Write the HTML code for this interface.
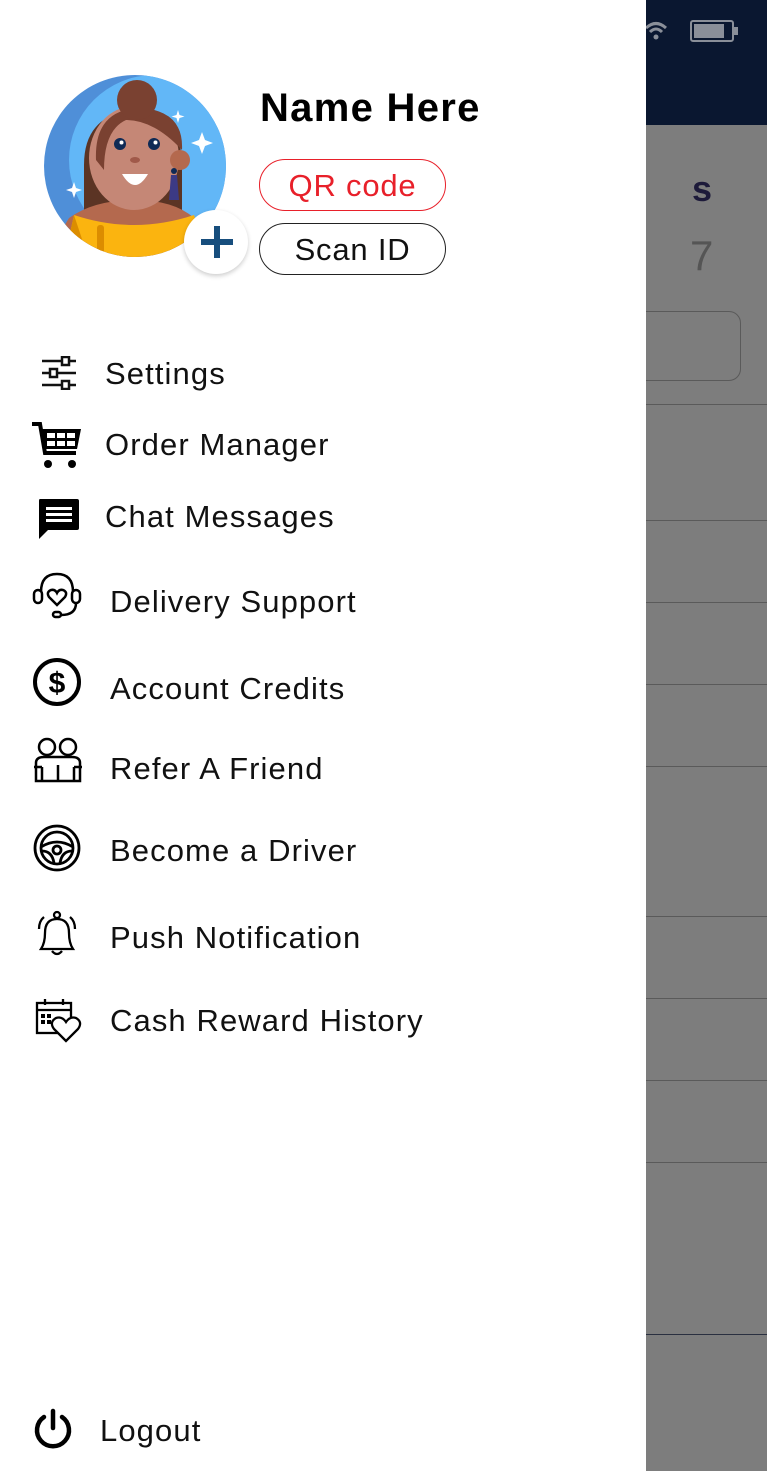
<!DOCTYPE html>
<html><head><meta charset="utf-8"><style>
*{margin:0;padding:0;box-sizing:border-box}
body{width:767px;height:1471px;position:relative;overflow:hidden;background:#fff;font-family:"Liberation Sans",sans-serif;color:#111}
.t{position:absolute;font-size:31px;line-height:36px;white-space:nowrap;letter-spacing:1.1px}
.ic{position:absolute}
.ov{position:absolute;left:646px;top:0;width:121px;height:1471px;background:#7d7d7d}
.ln{position:absolute;left:646px;width:121px;height:1px;background:#5a5a5a}
</style></head><body>
<div class="ov"></div>
<div style="position:absolute;left:646px;top:0;width:121px;height:125px;background:#0a1730"></div>
<svg class="ic" style="left:644px;top:18px" width="100" height="26" viewBox="0 0 100 26">
<path d="M2 10 Q12 1 22 10" stroke="#8a8f99" stroke-width="3" fill="none"/>
<path d="M6 14 Q12 8 18 14" stroke="#8a8f99" stroke-width="3" fill="none"/>
<circle cx="12" cy="19" r="2.5" fill="#8a8f99"/>
<rect x="47" y="3" width="42" height="20" rx="2" stroke="#8a8f99" stroke-width="2" fill="none"/>
<rect x="50" y="6" width="30" height="14" fill="#8a8f99"/>
<rect x="90" y="9" width="4" height="8" fill="#8a8f99"/>
</svg>
<div style="position:absolute;left:692px;top:168px;font-size:36px;font-weight:bold;color:#1d1a3a">s</div>
<div style="position:absolute;left:690px;top:232px;font-size:42px;color:#555">7</div>
<div style="position:absolute;left:600px;top:311px;width:141px;height:70px;border:1px solid #5a5a5a;border-radius:12px"></div>
<div class="ln" style="top:404px"></div><div class="ln" style="top:520px"></div><div class="ln" style="top:602px"></div><div class="ln" style="top:684px"></div><div class="ln" style="top:766px"></div><div class="ln" style="top:916px"></div><div class="ln" style="top:998px"></div><div class="ln" style="top:1080px"></div><div class="ln" style="top:1162px"></div><div class="ln" style="top:1334px;background:#2a3040"></div>
<div style="position:absolute;left:0;top:0;width:646px;height:1471px;background:#fff"></div>

<svg class="ic" style="left:44px;top:70px" width="185" height="190" viewBox="0 0 185 190">
<defs><clipPath id="c"><circle cx="91" cy="96" r="91"/></clipPath></defs>
<circle cx="91" cy="96" r="91" fill="#4f8fd8"/>
<g clip-path="url(#c)">
<circle cx="110" cy="90" r="85" fill="#62b7f7"/>
<path d="M40 95 Q40 45 90 40 Q140 45 138 100 L138 140 L40 140Z" fill="#5b3424"/>
<rect x="75" y="120" width="30" height="40" fill="#b4694e"/>
<path d="M0 190 L25 148 Q50 130 90 130 Q130 130 150 148 L180 190Z" fill="#b4694e"/>
<path d="M20 190 L30 145 Q90 165 150 145 L165 190Z" fill="#fbb40f"/>
<path d="M30 145 L45 190 L20 190Z" fill="#dc8d00"/>
<rect x="53" y="155" width="7" height="35" rx="3" fill="#dc8d00"/>
<ellipse cx="90" cy="88" rx="45" ry="52" fill="#c58776"/>
<circle cx="136" cy="90" r="10" fill="#b4694e"/>
<path d="M52 90 Q50 40 95 38 Q140 40 138 80 Q110 50 82 50 Q60 60 60 100Z" fill="#7a4131"/>
<circle cx="93" cy="30" r="20" fill="#7a4131"/>
<circle cx="76" cy="74" r="6" fill="#0f2a55"/><circle cx="110" cy="74" r="6" fill="#0f2a55"/>
<circle cx="77.5" cy="72.5" r="2" fill="#fff"/><circle cx="111.5" cy="72.5" r="2" fill="#fff"/>
<ellipse cx="91" cy="90" rx="5" ry="3" fill="#a0594a"/>
<path d="M78 104 Q91 126 104 104Z" fill="#fff"/>
<circle cx="130" cy="101" r="3" fill="#0f2a55"/>
<path d="M127 105 L133 105 L135 130 L125 130Z" fill="#3c3a85"/>
</g>
<path d="M158 62 l3 8 8 3 -8 3 -3 8 -3 -8 -8 -3 8 -3z" fill="#fff"/>
<path d="M30 112 l2 6 6 2 -6 2 -2 6 -2 -6 -6 -2 6 -2z" fill="#fff"/>
<path d="M134 40 l1.5 5 5 1.5 -5 1.5 -1.5 5 -1.5 -5 -5 -1.5 5 -1.5z" fill="#fff"/>
</svg>
<div style="position:absolute;left:184px;top:210px;width:64px;height:64px;border-radius:50%;background:#fff;box-shadow:0 2px 5px rgba(0,0,0,.2)"></div>
<div style="position:absolute;left:201px;top:239px;width:32px;height:6px;background:#174e7d"></div>
<div style="position:absolute;left:214px;top:226px;width:6px;height:32px;background:#174e7d"></div>

<div style="position:absolute;left:260px;top:86px;font-size:40px;font-weight:bold;color:#000;letter-spacing:1.3px">Name Here</div>
<div style="position:absolute;left:259px;top:159px;width:187px;height:52px;border:1px solid #e8202a;border-radius:26px;color:#e8202a;font-size:31px;line-height:52px;text-align:center;letter-spacing:0.8px">QR code</div>
<div style="position:absolute;left:259px;top:223px;width:187px;height:52px;border:1px solid #222;border-radius:26px;color:#111;font-size:31px;line-height:52px;text-align:center;letter-spacing:0.8px">Scan ID</div>

<svg class="ic" style="left:40px;top:356px" width="38" height="34" viewBox="0 0 38 34" stroke="#111" stroke-width="2.5" fill="#fff">
<line x1="2" y1="5" x2="36" y2="5"/><line x1="2" y1="17" x2="36" y2="17"/><line x1="2" y1="29" x2="36" y2="29"/>
<rect x="22" y="1" width="7" height="8"/><rect x="10" y="13" width="7" height="8"/><rect x="22" y="25" width="7" height="8"/>
</svg>
<div class="t" style="left:105px;top:356px">Settings</div>

<svg class="ic" style="left:31px;top:421px" width="52" height="50" viewBox="0 0 52 50">
<path d="M1 3 L9 3 L14 32 L45 32" stroke="#000" stroke-width="4" fill="none"/>
<path d="M10 8 L50 8 L46 28 L14 28Z" fill="#000"/>
<g fill="#fff"><rect x="16" y="12" width="8" height="5"/><rect x="26" y="12" width="8" height="5"/><rect x="36" y="12" width="8" height="5"/><rect x="16" y="20" width="8" height="5"/><rect x="26" y="20" width="8" height="5"/><rect x="36" y="20" width="8" height="5"/></g>
<circle cx="17" cy="43" r="4" fill="#000"/><circle cx="41" cy="43" r="4" fill="#000"/>
</svg>
<div class="t" style="left:105px;top:427px">Order Manager</div>

<svg class="ic" style="left:37px;top:498px" width="43" height="42" viewBox="0 0 43 42">
<path d="M3 1 H40 Q42 1 42 3 V30 Q42 32 40 32 H11 L2 41 V3 Q2 1 3 1Z" fill="#000"/>
<g fill="#fff"><rect x="9" y="9" width="26" height="3"/><rect x="9" y="15" width="26" height="3"/><rect x="9" y="21" width="26" height="3"/></g>
</svg>
<div class="t" style="left:105px;top:499px">Chat Messages</div>

<svg class="ic" style="left:31px;top:570px" width="52" height="50" viewBox="0 0 52 50" stroke="#000" stroke-width="2.5" fill="none">
<path d="M10 22 Q10 4 26 4 Q42 4 42 22"/>
<rect x="3" y="20" width="8" height="13" rx="4"/><rect x="41" y="20" width="8" height="13" rx="4"/>
<path d="M26 35 L18 27 Q15 22 20 20 Q24 19 26 23 Q28 19 32 20 Q37 22 34 27Z"/>
<path d="M45 33 Q45 45 30 45"/><rect x="22" y="42" width="8" height="5" rx="2.5"/>
</svg>
<div class="t" style="left:110px;top:584px">Delivery Support</div>

<svg class="ic" style="left:32px;top:657px" width="50" height="50" viewBox="0 0 50 50">
<circle cx="25" cy="25" r="22" stroke="#000" stroke-width="4" fill="none"/>
<text x="25" y="36" text-anchor="middle" font-family="Liberation Sans" font-weight="bold" font-size="30">$</text>
</svg>
<div class="t" style="left:110px;top:671px">Account Credits</div>

<svg class="ic" style="left:32px;top:737px" width="52" height="46" viewBox="0 0 52 46" stroke="#000" stroke-width="2.5" fill="none">
<circle cx="15" cy="10" r="8"/><circle cx="36" cy="10" r="8"/>
<path d="M4 44 V26 Q4 20 12 20 H40 Q48 20 48 26 V44 Z"/>
<path d="M10 44 V30 M42 44 V30 M26 44 V28"/>
<path d="M2 30 H10 M42 30 H50"/>
</svg>
<div class="t" style="left:110px;top:751px">Refer A Friend</div>

<svg class="ic" style="left:32px;top:823px" width="50" height="50" viewBox="0 0 50 50" stroke="#000" stroke-width="2.8" fill="none">
<circle cx="25" cy="25" r="22"/><circle cx="25" cy="25" r="16"/>
<path d="M9 24 Q25 14 41 24"/><circle cx="25" cy="27" r="4"/>
<path d="M10 28 Q20 28 22 40 M40 28 Q30 28 28 40"/>
</svg>
<div class="t" style="left:110px;top:833px">Become a Driver</div>

<svg class="ic" style="left:33px;top:909px" width="48" height="50" viewBox="0 0 48 50" stroke="#000" stroke-width="2.3" fill="none">
<circle cx="24" cy="6" r="3"/>
<path d="M8 40 Q12 34 12 24 Q12 10 24 10 Q36 10 36 24 Q36 34 40 40 Z"/>
<path d="M19 42 Q24 48 29 42"/>
<path d="M6 20 Q6 12 11 8 M42 20 Q42 12 37 8"/>
</svg>
<div class="t" style="left:110px;top:920px">Push Notification</div>

<svg class="ic" style="left:34px;top:997px" width="52" height="46" viewBox="0 0 52 46" stroke="#000" stroke-width="2.3" fill="none">
<rect x="3" y="6" width="34" height="30"/><line x1="3" y1="13" x2="37" y2="13"/>
<path d="M11 2 V8 M29 2 V8"/>
<g fill="#000" stroke="none"><rect x="7" y="17" width="4" height="4"/><rect x="13" y="17" width="4" height="4"/><rect x="7" y="23" width="4" height="4"/><rect x="13" y="23" width="4" height="4"/></g>
<path d="M32 44 L20 32 Q15 25 22 21 Q28 19 32 25 Q36 19 42 21 Q49 25 44 32 Z" fill="#fff"/>
</svg>
<div class="t" style="left:110px;top:1003px">Cash Reward History</div>

<svg class="ic" style="left:32px;top:1408px" width="42" height="42" viewBox="0 0 42 42" stroke="#000" stroke-width="4.5" fill="none" stroke-linecap="round">
<path d="M12 9 A16 16 0 1 0 30 9"/><line x1="21" y1="3" x2="21" y2="20"/>
</svg>
<div class="t" style="left:100px;top:1413px">Logout</div>
</body></html>
